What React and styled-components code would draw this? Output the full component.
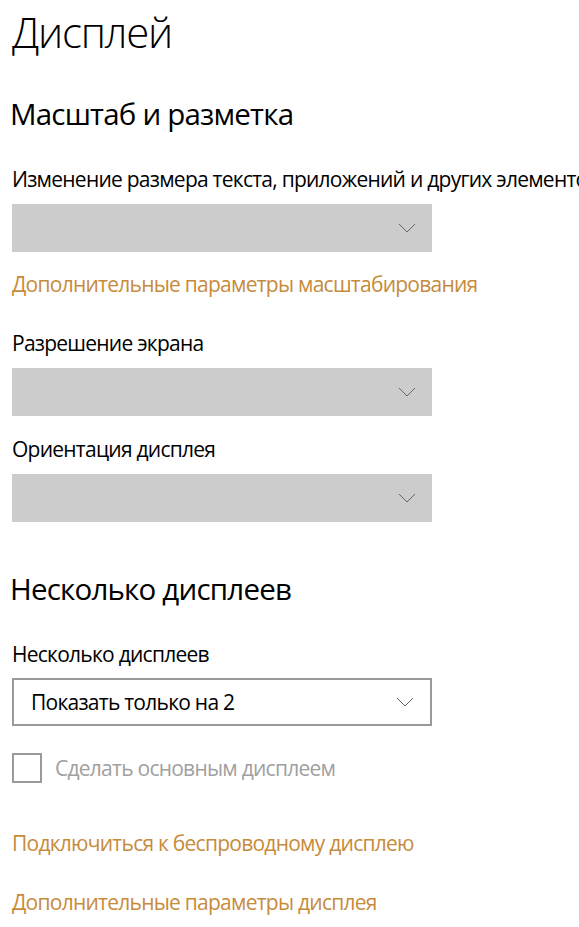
import { createGlobalStyle, styled } from 'styled-components';

const GlobalStyle = createGlobalStyle`
  html, body {
    margin: 0;
    padding: 0;
    background: #ffffff;
  }
  body {
    font-family: 'Open Sans', 'Noto Sans', sans-serif;
    color: #000000;
    overflow: hidden;
  }
`;

const Page = styled.div`
  display: flex;
  flex-direction: column;
  padding: 4px 0 0 12px;
  width: 579px;
  box-sizing: border-box;
  white-space: nowrap;
`;

const Title = styled.h1`
  margin: 0;
  font-size: 42px;
  line-height: 56px;
  font-weight: 300;
  letter-spacing: -1.3px;
`;

const SectionTitle = styled.h2`
  margin: ${({ $top }) => $top}px 0 0 -2px;
  font-size: 29.5px;
  line-height: 40px;
  font-weight: 400;
  letter-spacing: -0.8px;
`;

const Label = styled.div`
  margin-top: ${({ $top }) => $top}px;
  font-size: 21px;
  line-height: 30px;
  letter-spacing: -0.75px;
`;

const Select = styled.div`
  margin-top: ${({ $top }) => $top ?? 10}px;
  width: 420px;
  height: 48px;
  box-sizing: border-box;
  display: flex;
  align-items: center;
  justify-content: space-between;
  padding: 0 16px 0 17px;
  background: ${({ $filled }) => ($filled ? '#ffffff' : '#cccccc')};
  border: ${({ $filled }) => ($filled ? '2px solid #999999' : 'none')};
  font-size: 21px;
  line-height: 30px;
  letter-spacing: -0.75px;
`;

const Link = styled.a`
  display: block;
  margin-top: ${({ $top }) => $top}px;
  font-size: 21px;
  line-height: 30px;
  letter-spacing: -0.75px;
  color: #c78b3c;
  text-decoration: none;
`;

const CheckRow = styled.label`
  margin-top: 27px;
  display: flex;
  align-items: center;
  gap: 13px;
  font-size: 21px;
  line-height: 30px;
  letter-spacing: -0.75px;
  color: #a0a0a0;
`;

const Box = styled.span`
  width: 30px;
  height: 30px;
  box-sizing: border-box;
  border: 2px solid #9a9a9a;
`;

const Chevron = () => (
  <svg width="18" height="10" viewBox="0 0 18 10">
    <path d="M1 1 L9 9 L17 1" fill="none" stroke="#666666" strokeWidth="1" />
  </svg>
);

export default function App() {
  return (
    <Page>
      <GlobalStyle />
      <Title>Дисплей</Title>
      <SectionTitle $top={34}>Масштаб и разметка</SectionTitle>
      <Label $top={30}>Изменение размера текста, приложений и других элементов</Label>
      <Select>
        <span />
        <Chevron />
      </Select>
      <Link $top={17}>Дополнительные параметры масштабирования</Link>
      <Label $top={29}>Разрешение экрана</Label>
      <Select>
        <span />
        <Chevron />
      </Select>
      <Label $top={18}>Ориентация дисплея</Label>
      <Select>
        <span />
        <Chevron />
      </Select>
      <SectionTitle $top={47}>Несколько дисплеев</SectionTitle>
      <Label $top={30}>Несколько дисплеев</Label>
      <Select $filled $top={9}>
        <span>Показать только на 2</span>
        <Chevron />
      </Select>
      <CheckRow>
        <Box />
        Сделать основным дисплеем
      </CheckRow>
      <Link $top={45}>Подключиться к беспроводному дисплею</Link>
      <Link $top={29}>Дополнительные параметры дисплея</Link>
    </Page>
  );
}
